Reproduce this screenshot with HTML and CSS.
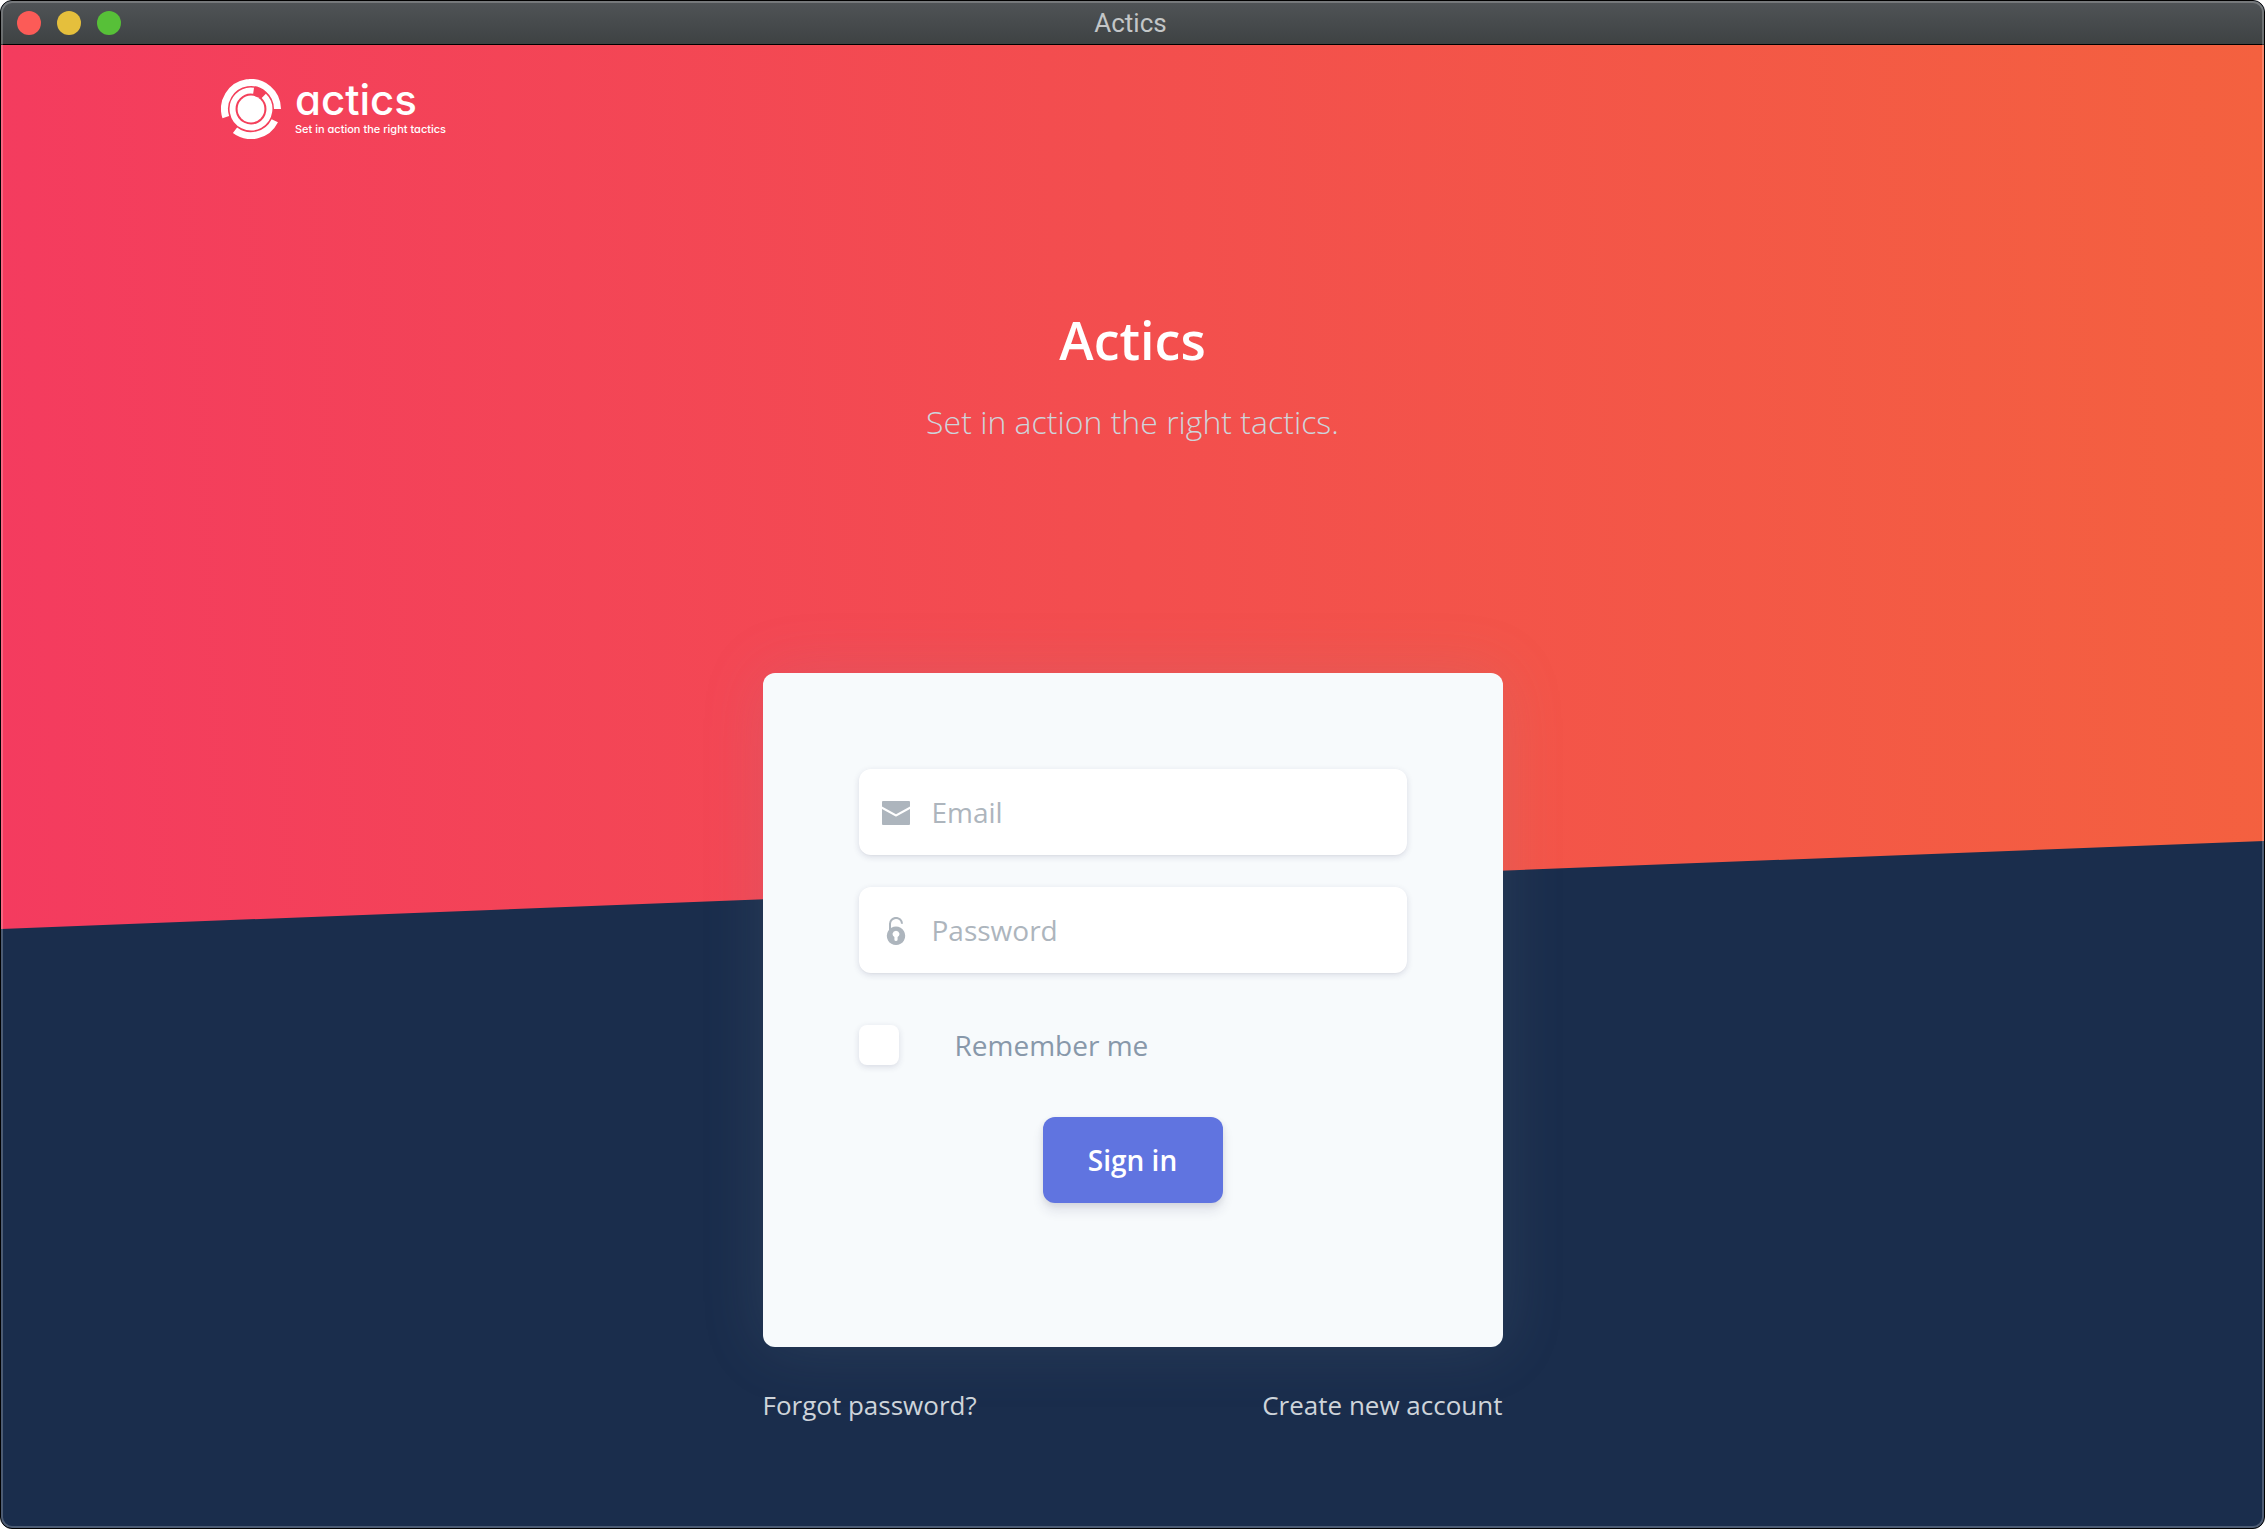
FILE: index.html
```
<!DOCTYPE html>
<html lang="en">
<head>
<meta charset="utf-8">
<meta name="viewport" content="width=device-width, initial-scale=1">
<title>Actics</title>
<link rel="stylesheet" href="styles.css">
</head>
<body>
<div class="window">
  <header class="titlebar">
    <div class="controls">
      <button class="control control-close" type="button" aria-label="Close"></button>
      <button class="control control-minimize" type="button" aria-label="Minimize"></button>
      <button class="control control-zoom" type="button" aria-label="Zoom"></button>
    </div>
    <span class="titlebar-text">Actics</span>
  </header>

  <section class="hero">
    <nav class="navbar">
      <a class="brand" href="#">
        <svg class="brand-mark" viewBox="-30 -30 60 60" aria-hidden="true">
          <g fill="none" stroke="#fff" stroke-width="7">
            <path d="M-25.2 8.2A26.5 26.5 0 1 1 26.5 0"/>
            <path d="M23.8 11.7A26.5 26.5 0 0 1 -16 21.2"/>
            <path d="M12.8 -13.2A18.4 18.4 0 1 1 2.6 -18.2" stroke-width="6"/>
          </g>
          <circle r="13.4" fill="#fff"/>
        </svg>
        <span class="brand-text">
          <span class="brand-name">actics</span>
          <span class="brand-tagline">Set in action the right tactics</span>
        </span>
      </a>
    </nav>
    <div class="intro">
      <h1 class="intro-title">Actics</h1>
      <p class="intro-lead">Set in action the right tactics.</p>
    </div>
  </section>

  <main class="login">
    <form class="card">
      <div class="field">
        <label class="field-icon" for="email" aria-label="Email">
          <svg width="28" height="28" viewBox="0 0 28 28" fill="#adb5bd" aria-hidden="true">
            <path d="M1 2h26a1 1 0 0 1 1 1v4.600L14 15.200 0 7.600V3a1 1 0 0 1 1-1z"/>
            <path d="M0 10l13.200 7.200q.8.400 1.600 0L28 10v15a1 1 0 0 1-1 1H1a1 1 0 0 1-1-1z"/>
          </svg>
        </label>
        <input class="field-input" id="email" type="email" placeholder="Email">
      </div>
      <div class="field">
        <label class="field-icon" for="password" aria-label="Password">
          <svg width="28" height="28" viewBox="0 0 28 28" fill="none" aria-hidden="true">
            <path d="M8 13V7a6 6 0 0 1 12-.2" stroke="#adb5bd" stroke-width="2"/>
            <path fill="#adb5bd" fill-rule="evenodd" d="M14 9.600a9.200 9.200 0 1 0 .01 0zM14 13.700a3.400 3.400 0 0 1 1.600 6.400v2.300a1.600 1.600 0 0 1-3.200 0v-2.300A3.400 3.400 0 0 1 14 13.700z"/>
          </svg>
        </label>
        <input class="field-input" id="password" type="password" placeholder="Password">
      </div>
      <div class="remember">
        <input class="remember-box" id="remember" type="checkbox">
        <label for="remember">Remember me</label>
      </div>
      <button class="submit" type="submit">Sign in</button>
    </form>
    <div class="links">
      <a class="link" href="#">Forgot password?</a>
      <a class="link" href="#">Create new account</a>
    </div>
  </main>
</div>
</body>
</html>
```
FILE: styles.css
```
* {
  box-sizing: border-box;
}

body {
  margin: 0;
  background: #fff;
  font-family: "Open Sans", sans-serif;
}

.window {
  position: relative;
  display: flex;
  flex-direction: column;
  min-height: 100vh;
  overflow: hidden;
  border: 1px solid #000;
  border-radius: 12px;
  background: #1a2d4c;
}

/* light rim along the inside of the window frame */
.window::after {
  content: "";
  position: absolute;
  inset: 0;
  border: 2px solid rgba(255, 255, 255, 0.22);
  border-radius: 11px;
  pointer-events: none;
}

.titlebar {
  display: grid;
  grid-template-columns: 1fr auto 1fr;
  align-items: center;
  height: 44px;
  padding: 0 20px 0 16px;
  border-bottom: 1px solid #000;
  background: linear-gradient(#505457, #3e4243);
}

.controls {
  display: flex;
  gap: 16px;
}

.control {
  width: 24px;
  height: 24px;
  padding: 0;
  border: 0;
  border-radius: 50%;
}

.control-close {
  background: #fc5b57;
}

.control-minimize {
  background: #e5bf3c;
}

.control-zoom {
  background: #57c038;
}

.titlebar-text {
  font: 26px/32px Roboto, sans-serif;
  color: #c3c6c7;
}

.hero {
  height: 884px;
  padding: 34px 220px 0;
  background: linear-gradient(87deg, #f43b5f, #f34e4e 50%, #f4613f);
  clip-path: polygon(0 0, 100% 0, 100% calc(100% - 88px), 0 100%);
}

.navbar {
  display: flex;
}

.brand {
  display: flex;
  align-items: center;
  gap: 14px;
  color: #fff;
  text-decoration: none;
}

.brand-mark {
  width: 60px;
  height: 60px;
}

.brand-text {
  display: flex;
  flex-direction: column;
  font-family: Inter, sans-serif;
  font-feature-settings: "cv11";
}

.brand-name {
  font-size: 42px;
  font-weight: 500;
  line-height: 40px;
}

.brand-tagline {
  font-size: 11px;
  font-weight: 500;
  line-height: 18px;
}

.intro {
  margin-top: 162px;
  text-align: center;
}

.intro-title {
  margin: 0 0 16px;
  font-size: 52px;
  font-weight: 600;
  line-height: 78px;
  color: #fff;
}

.intro-lead {
  margin: 0;
  font-size: 32px;
  font-weight: 300;
  line-height: 54px;
  color: #ced4da;
}

.login {
  position: relative;
  width: 740px;
  max-width: 100%;
  margin: -256px auto 0;
}

.card {
  display: flex;
  flex-direction: column;
  gap: 32px;
  padding: 96px 96px 144px;
  border-radius: 12px;
  background: #f7fafc;
  box-shadow: 0 0 64px rgba(136, 152, 170, 0.15);
}

.field {
  display: flex;
  align-items: center;
  height: 86px;
  border-radius: 12px;
  background: #fff;
  box-shadow: 0 2px 6px rgba(50, 50, 93, 0.15), 0 1px 0 rgba(0, 0, 0, 0.02);
}

.field-icon {
  display: flex;
  padding: 2px 22px 0 23px;
}

.field-input {
  flex: 1;
  min-width: 0;
  padding: 0;
  border: 0;
  outline: 0;
  background: none;
  font: 28px/42px "Open Sans", sans-serif;
  color: #8898aa;
}

.field-input::placeholder {
  color: #adb5bd;
  opacity: 1;
}

.remember {
  display: flex;
  align-items: center;
  gap: 56px;
  padding: 20px 0;
  font-size: 28px;
  line-height: 40px;
  color: #8898aa;
}

.remember-box {
  appearance: none;
  width: 40px;
  height: 40px;
  margin: 0;
  border-radius: 8px;
  background: #fff;
  box-shadow: 0 2px 6px rgba(50, 50, 93, 0.15);
}

.submit {
  align-self: center;
  width: 180px;
  height: 86px;
  padding: 0;
  border: 0;
  border-radius: 12px;
  background: #6074e0;
  box-shadow: 0 8px 12px rgba(50, 50, 93, 0.11), 0 2px 6px rgba(0, 0, 0, 0.08);
  font: 600 28px/42px "Open Sans", sans-serif;
  color: #fff;
}

.links {
  display: flex;
  justify-content: space-between;
  margin-top: 38px;
}

.link {
  font-size: 26px;
  line-height: 40px;
  color: #ced4da;
  text-decoration: none;
}
```
